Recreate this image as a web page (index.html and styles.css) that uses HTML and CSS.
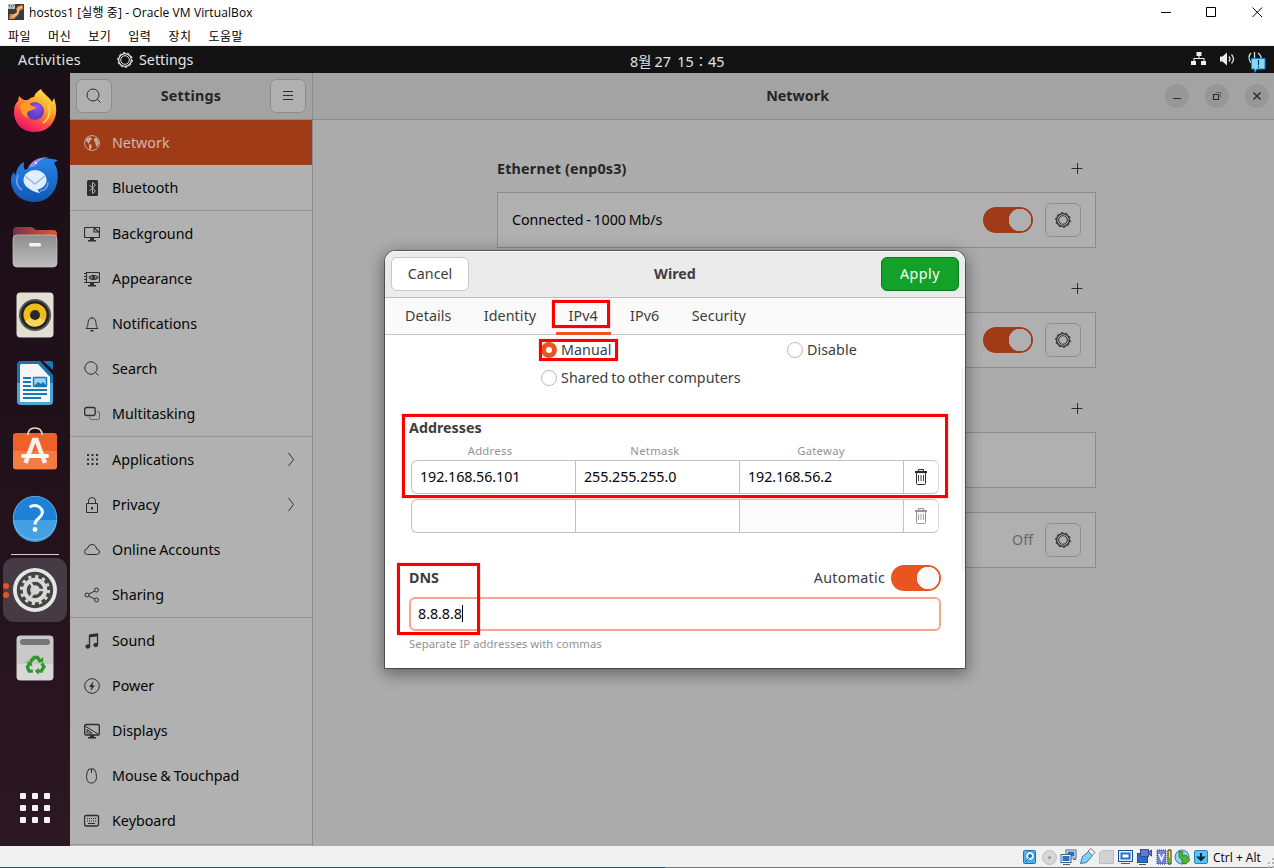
FILE: index.html
```html
<!DOCTYPE html>
<html lang="ko">
<head>
<meta charset="utf-8">
<title>hostos1 [실행 중] - Oracle VM VirtualBox</title>
<link rel="stylesheet" href="styles.css">
</head>
<body>
<svg class="defs" width="0" height="0">
  <symbol id="search" viewBox="0 0 16 16"><circle cx="7" cy="7" r="6" /><path d="M11.3 11.3L14.5 14.5"/></symbol>
  <symbol id="gear" viewBox="0 0 16 16"><circle cx="8" cy="8" r="6.4" stroke-width="1.300"/><circle cx="8" cy="8" r="4.300"/><circle cx="8" cy="8" r="7.400" stroke-width="1" stroke-dasharray="2.200 2.450"/></symbol>
  <symbol id="trash" viewBox="0 0 16 18"><path d="M5.500 3V1.500h5V3M3.500 5v10.500q0 1 1 1h7q1 0 1-1V5"/><path d="M5.500 7v6M8 7v6M10.500 7v6" stroke-width=".9"/><path d="M2 4h12" stroke-width="2.200"/></symbol>
  <symbol id="plus" viewBox="0 0 12 12"><path d="M.5 6.500h11M6.500 1v11"/></symbol>
</svg>
<div class="screen">
  <header class="titlebar">
    <svg class="vmicon" viewBox="0 0 16 16"><rect width="16" height="16" fill="#343b43"/><path d="M0 0h7v5H0z" fill="#b9b9b5"/><path d="M1 1h1v1H1zM3 2h1v1H3zM5 1h1v1H5z" fill="#444"/><path d="M15 1L10 2 8 5 9 8 6 10 2 10 1 15h5l4-4 1-4 4-2z" fill="#e78535"/><path d="M14 3l-3 1-1 5-6 4" stroke="#f8c889" stroke-width="1.500" fill="none"/></svg>
    <span class="wintitle">hostos1 [실행 중] - Oracle VM VirtualBox</span>
    <svg class="winctl" viewBox="0 0 104 12" fill="none" stroke="#000"><path d="M1 6.500h10M46.500 1.500h9v9h-9zM92.500 1.500l9.500 9.500M102 1.500l-9.500 9.500"/></svg>
  </header>
  <nav class="menubar"><span>파일</span><span>머신</span><span>보기</span><span>입력</span><span>장치</span><span>도움말</span></nav>

  <div class="topbar">
    <span class="activities">Activities</span>
    <span class="appname"><svg class="ic" width="16" height="16"><use href="#gear"/></svg>Settings</span>
    <span class="clock">8월 27&nbsp; 15∶45</span>
    <svg class="tray" viewBox="0 0 76 20" fill="#eee">
      <path d="M5.500 2h5v4h-5zM0 11h5v4H0zM10 11h5v4h-5z"/><path d="M7.500 5h1v3h5v3h-1V9h-9v2h-1V8h5z"/>
      <path d="M29 6.500h2.500L36 2.500v13l-4.500-4H29z"/><path d="M38 6.500q2 2.500 0 5M40.500 4.500q4 4.500 0 9" fill="none" stroke="#ddd" stroke-width="1.300"/>
      <path d="M60 3q-4 4 0 10M63.500 2v7M67 3q4 3 3 7" fill="none" stroke="#ddd" stroke-width="1.300"/>
      <path d="M60.500 8.500h13.500v10.500h-8l-2.500 3.500v-3.500h-3z" fill="#7fdcfb" stroke="#187ec8"/><path d="M67.500 10v5M67.500 16v1.500" stroke="#123" stroke-width="1.200"/>
    </svg>
  </div>

  <div class="desktop">
    <aside class="dock">
      <div class="app"><svg viewBox="0 0 48 48">
        <defs><linearGradient id="fx" x1=".85" y1="0" x2=".3" y2="1"><stop offset="0" stop-color="#fff24a"/><stop offset=".4" stop-color="#ffa32c"/><stop offset=".7" stop-color="#ff4a45"/><stop offset="1" stop-color="#e8106f"/></linearGradient><radialGradient id="fp" cx=".6" cy=".3"><stop offset="0" stop-color="#9c50f0"/><stop offset="1" stop-color="#5b3fc4"/></radialGradient></defs>
        <path d="M30 2c1 4 9 8 11 13l2-4c4 12 2 19-1 24-4 7-11 10-19 10C11 45 3 36 3 25c0-5 1-8 4-11l1-5c2 2 3 3 5 4h4c2-2 4-3 6-3 1-4 4-6 7-8z" fill="url(#fx)"/><circle cx="24" cy="24" r="9" fill="url(#fp)"/><path d="M9 18c4-3 8-3 12 1l4 1c-1 3-5 3-7 4-3 2-2 5 0 7-5-1-9-5-9-13z" fill="#ff9b22"/><path d="M37 17c3 8 1 15-5 19" stroke="#ffd645" stroke-width="2" fill="none"/></svg></div>
      <div class="app"><svg viewBox="0 0 48 48">
        <defs><linearGradient id="tb" x1="0" y1="0" x2="0" y2="1"><stop offset="0" stop-color="#2685e8"/><stop offset="1" stop-color="#1257b4"/></linearGradient></defs>
        <path d="M19 12q6-11 22-8l6 1-4 3c8 11 4 38-19 39C9 47 0 37 0 25q0-5 3-8l1 4Q7 9 13 7q-1 5 1 8z" fill="url(#tb)"/><path d="M17 13Q22 2 38 2q-10 2-14 9z" fill="#9b8ce7"/><path d="M7 20q-4 10 4 15M29 36q8-1 8-9" stroke="#7f9cf0" stroke-width="1.500" fill="none"/><ellipse cx="24" cy="25" rx="11.500" ry="10" fill="#deefff"/><path d="M15 31q6 6 14 7l-3-4z" fill="#deefff"/><path d="M14 21l10 8 10-8" fill="none" stroke="#9db8d6" stroke-width="1.500"/><circle cx="25" cy="8" r="1" fill="#fff"/></svg></div>
      <div class="app"><svg viewBox="0 0 48 48">
        <defs><linearGradient id="fl"><stop offset="0" stop-color="#77304f"/><stop offset="1" stop-color="#e5582a"/></linearGradient><linearGradient id="fg" x1="0" y1="0" x2="0" y2="1"><stop offset="0" stop-color="#8d8d8d"/><stop offset="1" stop-color="#bdbdbd"/></linearGradient></defs>
        <path d="M2 8q0-4 4-4h15l4 3h17q4 0 4 4v8H2z" fill="url(#fl)"/><rect x="2" y="12" width="44" height="32" rx="4" fill="url(#fg)" stroke="#c9c9c9" stroke-width=".7"/><rect x="18" y="20" width="12" height="3.500" rx="1.500" fill="#f3f3f3"/></svg></div>
      <div class="app"><svg viewBox="0 0 48 48">
        <rect x="5.500" y="1.500" width="37" height="45" rx="4" fill="#e2dfd3"/><circle cx="24" cy="24" r="16" fill="#55534f"/><circle cx="24" cy="24" r="14" fill="#20212e"/><circle cx="24" cy="24" r="11.500" fill="#f0bd17"/><path d="M24 24L14 30q4 6 10 5.500T34 30z" fill="#fad55a"/><circle cx="24" cy="24" r="5" fill="#292929"/></svg></div>
      <div class="app"><svg viewBox="0 0 48 48">
        <path d="M10 2h19l13 14v26q0 4-4 4H10q-4 0-4-4V6q0-4 4-4z" fill="#1676b4"/><path d="M6 24h36v18q0 4-4 4H10q-4 0-4-4z" fill="#49a7d8"/><path d="M10 5h17l12 13v25H10q-1 0-1-1V6z" fill="#f7f7f7"/><path d="M32 2h8q2 0 2 2v7z" fill="#1579b7"/><path d="M12 19h8M12 23h8M12 27h8M12 31h24M12 35h24M12 39h18" stroke="#1579b7" stroke-width="2"/><rect x="22.500" y="18.500" width="13" height="9" rx="1" fill="#9cd2f3" stroke="#1579b7" stroke-width="1.500"/><path d="M23 27l4-4 3 2 2-2 4 4z" fill="#1579b7"/></svg></div>
      <div class="app"><svg viewBox="0 0 48 48">
        <rect x="2" y="6" width="44" height="36.500" rx="3" fill="#f0602a"/><path d="M2 24h44v15q0 3-3 3H5q-3 0-3-3z" fill="#f37c43"/><path d="M17 8q0-7 7-7t7 7" fill="none" stroke="#ecdcb0" stroke-width="1.700"/><path d="M14.500 36L23 13h2.500L34 36" fill="none" stroke="#f7f1ea" stroke-width="4.500"/><path d="M12 29h24" stroke="#fff" stroke-width="4" stroke-linecap="round"/></svg></div>
      <div class="app"><svg viewBox="0 1 48 48">
        <circle cx="24" cy="24" r="22" fill="#1d81d7"/><path d="M2 26h44a22 22 0 0 1-44 0z" fill="#42a1e2"/><circle cx="24" cy="24" r="21.700" fill="none" stroke="#8fcaf0" stroke-width=".6"/><path d="M18.500 13q5-2.500 9-.5t4 6q-.5 3-4 6-3.500 2.500-3.500 6" fill="none" stroke="#fff" stroke-width="3"/><circle cx="24" cy="35.500" r="2.400" fill="#fff"/></svg></div>
      <div class="rule"></div>
      <div class="app active"><i class="dots"></i><svg viewBox="0 0 48 48">
        <circle cx="24" cy="24" r="22" fill="#e6e6e6"/><circle cx="24" cy="24" r="18.200" fill="#444442"/><circle cx="24" cy="24" r="13.600" fill="none" stroke="#d9d9d9" stroke-width="3" stroke-dasharray="3.200 3.900"/><circle cx="24" cy="24" r="10.300" fill="none" stroke="#d9d9d9" stroke-width="4"/><circle cx="24" cy="24" r="4.800" fill="#d4d4d4"/><path d="M24 24h9M24 24l-5 8M24 24l-5-8" stroke="#d4d4d4" stroke-width="2.500"/></svg></div>
      <div class="app"><svg viewBox="0 0 48 48">
        <rect x="5.500" y="1.500" width="37" height="45" rx="4" fill="#c9c9c9"/><path d="M6 30h36v13q0 3-3 3H9q-3 0-3-3z" fill="#d8d8d8"/><rect x="9" y="5" width="30" height="6" rx="3" fill="#757575"/><g transform="translate(3.600 4.800) scale(.85)"><g fill="none" stroke="#30972a" stroke-width="4"><path d="M18.500 27l4.500-5h4l3.500 5M32 29l2.500 4-3 5H26M21.500 38H17l-2-5 3.500-5"/></g><path d="M27 27.500h6.500v-6zM28 34l-4 4 4 4.500zM13 27h7l1 6z" fill="#30972a"/></g></svg></div>
      <div class="app grid"><svg viewBox="0 0 48 48" fill="#f5f2f3"><g id="r"><rect x="9" y="9" width="6" height="6" rx="1"/><rect x="21" y="9" width="6" height="6" rx="1"/><rect x="33" y="9" width="6" height="6" rx="1"/></g><use href="#r" y="12"/><use href="#r" y="24"/></svg></div>
    </aside>

    <aside class="sidebar">
      <div class="sidehead"><span class="btn"><svg class="ic" width="16" height="16"><use href="#search"/></svg></span><b>Settings</b><span class="btn"><svg class="ic" width="16" height="16"><path d="M3 3.500h10M3 7.500h10M3 11.500h10"/></svg></span></div>
      <div class="row selected"><svg class="ic" viewBox="0 0 16 16"><circle cx="8" cy="8" r="7.500"/><path d="M2 3l5-1 1 2-2 2-1 3-3-3zM5 9l3 1-1 4-2 1zM10 3l3 0 2 5-2 4-1-1-1-4-1-1z" fill="currentColor" stroke="none"/></svg>Network</div>
      <div class="row"><svg class="ic" viewBox="0 0 16 16"><rect x="3" y="0" width="11" height="16" rx="1.500" fill="#2d2d2d" stroke="none"/><path d="M5.500 5l6 6-3 2.500v-11l3 2.500-6 6" stroke="#b1b1b1"/></svg>Bluetooth</div>
      <div class="row sep"><svg class="ic" viewBox="0 0 16 16"><path d="M9 1.500H1.500q-1 0-1 1v8q0 1 1 1h13q1 0 1-1V7M10 1.500h5.500V7L10 1.500V6h5" stroke-width="1.200"/><path d="M6 12h4v2h2v1.500H4V14h2z" fill="#2d2d2d" stroke="none"/></svg>Background</div>
      <div class="row"><svg class="ic" viewBox="0 0 16 16"><path d="M2.500 1.500h12q1 0 1 1v8q0 1-1 1h-12M2.500 1v11M0 2.500h2M0 5.500h2M0 8.500h2M0 11.500h2M5 6.500q4.500-4.500 9 0-4.500 4.500-9 0" stroke-width="1.100"/><circle cx="9.500" cy="6.500" r="1.300" fill="#2d2d2d"/><path d="M6 12h4v2h2v1.500H4V14h2z" fill="#2d2d2d" stroke="none"/></svg>Appearance</div>
      <div class="row"><svg class="ic" viewBox="0 0 16 16"><path d="M2 12.500q2-1.500 2-5Q4 2 8 2t4 5.500q0 3.500 2 5zM8 2V1"/><path d="M6.500 14h3v1.500h-3z" fill="#2d2d2d" stroke="none"/></svg>Notifications</div>
      <div class="row"><svg class="ic" viewBox="0 0 16 16"><circle cx="7" cy="7" r="6.200"/><path d="M11.500 11.500l3 3"/></svg>Search</div>
      <div class="row"><svg class="ic" viewBox="0 0 16 16"><rect x=".7" y="1.500" width="10.500" height="8" rx="1.800" stroke-width="1.300"/><path d="M5.500 11v1q0 1.500 1.500 1.500h7q1.500 0 1.500-1.500V7q0-1.500-1.500-1.500h-1" stroke="#6a6a6a"/></svg>Multitasking</div>
      <div class="row sep"><svg class="ic" viewBox="0 0 16 16"><path d="M3 3h11M3 7.500h11M3 12h11" stroke-width="2" stroke-dasharray="2 2.500"/></svg>Applications<svg class="chev" viewBox="0 0 8 16"><path d="M1.500 1L6.500 7.500l-5 6.500"/></svg></div>
      <div class="row"><svg class="ic" viewBox="0 0 16 16"><path d="M2.500 6.500h11v9h-11zM4.500 6V4Q4.500.5 8 .5T11.500 4v2"/><path d="M7 10h2v2.500H7z" fill="#2d2d2d" stroke="none"/></svg>Privacy<svg class="chev" viewBox="0 0 8 16"><path d="M1.500 1L6.500 7.500l-5 6.500"/></svg></div>
      <div class="row"><svg class="ic" viewBox="0 0 16 16"><path d="M3.500 12.500q-3 0-3-3 0-2.500 3-3Q4 2.500 8 2.500t4.500 4.500q3 .5 3 3t-3 2.500z"/></svg>Online Accounts</div>
      <div class="row"><svg class="ic" viewBox="0 0 16 16"><circle cx="3" cy="8" r="2"/><circle cx="12.500" cy="3" r="2"/><circle cx="12.500" cy="13" r="2"/><path d="M4.800 7l6-3M4.800 9l6 3"/></svg>Sharing</div>
      <div class="row sep"><svg class="ic" viewBox="0 0 16 16"><path d="M5.500 13V2.500l8-1.200v10.200" stroke-width="1.300"/><path d="M5 1.500L14 .3v3L5 4.500z" fill="#2d2d2d" stroke="none"/><ellipse cx="3.800" cy="13.500" rx="2" ry="1.700" fill="#2d2d2d"/><ellipse cx="11.800" cy="12" rx="2" ry="1.700" fill="#2d2d2d"/></svg>Sound</div>
      <div class="row"><svg class="ic" viewBox="0 0 16 16"><circle cx="8" cy="8" r="7.300"/><path d="M9.500 3L5 9h2.500L6.500 13 11 7.500H8.500z" fill="#2d2d2d" stroke="none"/></svg>Power</div>
      <div class="row"><svg class="ic" viewBox="0 0 16 16"><rect x=".7" y="1.500" width="14.600" height="10.500" rx="1.200" stroke-width="1.300"/><path d="M1 3l14 8.500M3 6.500v3.500h5z" /><path d="M6 12h4v2h2v1.500H4V14h2z" fill="#2d2d2d" stroke="none"/></svg>Displays</div>
      <div class="row"><svg class="ic" viewBox="0 0 16 16"><path d="M5 1h5q2.500 3 2.500 7.500 0 6.500-5 6.500t-5-6.500Q2.500 4 5 1zM7.500 1v4"/></svg>Mouse &amp; Touchpad</div>
      <div class="row last"><svg class="ic" viewBox="0 0 16 16"><rect x=".5" y="2.500" width="14" height="10.500" rx="1.500" stroke-width="1.300"/><path d="M3 5.500h9M3 8h9" stroke-dasharray="1 1"/><path d="M4 10.500h7"/></svg>Keyboard</div>
    </aside>

    <main class="main">
      <div class="mainhead"><b>Network</b><div class="ctl"><span><svg class="ic" width="14" height="14"><path d="M3 9.500h8"/></svg></span><span><svg class="ic" width="14" height="14"><path d="M3.500 5.500h5v5h-5z" stroke-width="1.200"/><path d="M5.500 3.500h5v5" stroke="#666"/></svg></span><span><svg class="ic" width="14" height="14"><path d="M3.500 3.500l7 7M10.500 3.500l-7 7" stroke-width="1.500"/></svg></span></div></div>
      <div class="content">
        <div class="sect"><b>Ethernet (enp0s3)</b><svg class="ic" width="12" height="12"><use href="#plus"/></svg></div>
        <div class="card"><span>Connected - 1000 Mb/s</span><i class="switch"></i><span class="btn"><svg class="ic" width="16" height="16"><use href="#gear"/></svg></span></div>
        <div class="sect"><b></b><svg class="ic" width="12" height="12"><use href="#plus"/></svg></div>
        <div class="card"><span></span><i class="switch"></i><span class="btn"><svg class="ic" width="16" height="16"><use href="#gear"/></svg></span></div>
        <div class="sect"><b></b><svg class="ic" width="12" height="12"><use href="#plus"/></svg></div>
        <div class="card"></div>
        <div class="card proxy"><span></span><span class="off">Off</span><span class="btn"><svg class="ic" width="16" height="16"><use href="#gear"/></svg></span></div>
      </div>
    </main>
  </div>

  <footer class="status">
    <svg class="sticons" viewBox="0 0 188 20">
      <g stroke="#1c70b4"><rect x="1.500" y="3.500" width="12" height="13" rx="1" fill="#4bb4f2"/><circle cx="8" cy="9" r="4.500" fill="#e2f5ff" stroke="#2a8bd0"/><circle cx="8" cy="9" r="1.500" fill="#2575b8"/><path d="M3 15l4-4"/></g>
      <circle cx="27.500" cy="10.500" r="7" fill="#d7d7d7" stroke="#bcbcbc"/><circle cx="27.500" cy="10.500" r="1.500" fill="#999"/>
      <g stroke="#4b5f79"><rect x="44" y="3" width="10" height="8" fill="#fff"/><rect x="45.500" y="4.500" width="7" height="5" fill="#1f74d0" stroke="none"/><rect x="39" y="7.500" width="10" height="8" fill="#fff"/><rect x="40.500" y="9" width="7" height="5" fill="#1f74d0" stroke="none"/><path d="M41 17.500h7M51 12.500h3"/></g>
      <path d="M58.500 16.500l2-7 6-5 4 4-6 7z" fill="#82d0f7" stroke="#2b7db5"/><path d="M66 4l3-2.500 4 4-3 3z" fill="#eee" stroke="#777"/>
      <path d="M77.500 5.500l4-2h10v13h-14z" fill="#d2d2d2" stroke="#bdbdbd"/>
      <g stroke="#174f9b"><rect x="96.500" y="3.500" width="14" height="11" fill="#ddeafa"/><rect x="99.500" y="6.500" width="8" height="5" fill="#fff" stroke="#2474ce" stroke-width="2"/><path d="M99 16.500h9" stroke="#555"/></g>
      <g stroke="#394b83"><rect x="115.500" y="6.500" width="10" height="9" fill="#1f70cb"/><rect x="118.500" y="2.500" width="8" height="7" fill="#6377d5"/><path d="M126.500 5l3-2v6l-3-2z" fill="#6377d5"/><path d="M117 17.500h7" stroke="#555"/></g>
      <rect x="135" y="3" width="9" height="14" fill="#7183dc" stroke="#313c84" stroke-dasharray="1 1"/><path d="M137 7l2.500 6L142 7" fill="none" stroke="#fff" stroke-width="1.500"/><path d="M146 3h3v14h-3z" fill="#f8e94b" stroke="#222"/><path d="M146.500 11h2v5h-2z" fill="#35c23b"/>
      <circle cx="160" cy="10" r="7" fill="#8ed4f6" stroke="#307aad"/><path d="M157 4l4 1-1 4 4-1 4 5-4 4-4-1v-3l-3-3z" fill="#53b32d" stroke="#277020" stroke-width=".7"/>
      <rect x="172.500" y="3.500" width="13" height="13" rx="1.500" fill="#53c4f4" stroke="#2384bc"/><path d="M179 6v5M176.500 10.500l2.500 2.500 2.500-2.500z" fill="#082547" stroke="#082547" stroke-width="2"/>
    </svg>
    <span class="key">Ctrl + Alt</span><svg class="grip" viewBox="0 0 6 12" fill="#b4b4b4"><path d="M4 2h2v2H4zM0 6h2v2H0zM4 6h2v2H4zM0 10h2v2H0zM4 10h2v2H4z"/></svg>
  </footer>

  <section class="dialog">
    <div class="dhead"><span class="cancel">Cancel</span><b>Wired</b><span class="apply">Apply</span></div>
    <div class="tabs"><span>Details</span><span>Identity</span><span class="on">IPv4</span><span>IPv6</span><span>Security</span></div>
    <div class="dbody">
      <div class="radios"><label><i class="radio checked"></i><span>Manual</span></label><label><i class="radio"></i><span>Disable</span></label><label><i class="radio"></i><span>Shared to other computers</span></label></div>
      <b class="addrtitle">Addresses</b>
      <div class="cols small"><span>Address</span><span>Netmask</span><span>Gateway</span></div>
      <div class="entry"><span>192.168.56.101</span><span>255.255.255.0</span><span>192.168.56.2</span><em><svg class="ic" width="16" height="18"><use href="#trash"/></svg></em></div>
      <div class="entry blank"><span></span><span></span><span></span><em><svg class="ic" width="16" height="18"><use href="#trash"/></svg></em></div>
      <div class="dns"><b>DNS</b><span>Automatic</span><i class="switch"></i></div>
      <div class="dnsentry">8.8.8.8<i class="caret"></i></div>
      <div class="hint small">Separate IP addresses with commas</div>
    </div>
    <i class="trough"></i>
    <i class="mark m-tab"></i><i class="mark m-manual"></i><i class="mark m-addr"></i><i class="mark m-dns"></i>
  </section>
</div>
</body>
</html>
```
FILE: styles.css
```css
* { box-sizing: border-box; }
body { margin: 0; overflow: hidden; font-family: "Noto Sans", "Noto Sans CJK KR", sans-serif; font-size: 14.3px; letter-spacing: 0; word-spacing: -.8px; color: #050505; white-space: nowrap; }
i, em { font-style: normal; }
.defs { position: absolute; }
.screen { position: relative; width: 1274px; height: 868px; display: flex; flex-direction: column; background: #fff; }
.ic { flex: none; width: 16px; height: 16px; fill: none; stroke: #2d2d2d; stroke-width: 1; color: #c6a596; }

.titlebar { height: 24px; display: flex; align-items: center; padding: 0 10px 0 8px; font: 12px "Open Sans", "Noto Sans CJK KR", sans-serif; letter-spacing: .1px; word-spacing: 0; color: #000; }
.vmicon { width: 16px; height: 16px; margin-right: 5px; }
.wintitle { flex: 1; }
.winctl { width: 104px; height: 12px; }
.menubar { height: 22px; display: flex; align-items: center; gap: 17px; padding: 2px 8px 0 8px; font: 12px "Noto Sans CJK KR", sans-serif; letter-spacing: .5px; color: #000; border-bottom: 1px solid #f0f0f0; }

.topbar { height: 27px; display: grid; grid-template-columns: 117px 513px 1fr 83px; align-items: center; background: #131313; color: #e4e4e4; }
.activities { padding-left: 18px; letter-spacing: .35px; }
.appname { display: flex; align-items: center; gap: 6px; }
.appname .ic { stroke: #e4e4e4; }
.clock { padding-top: 2px; letter-spacing: 0; word-spacing: -.5px; }
.tray { width: 76px; height: 20px; overflow: visible; }

.desktop { height: 773px; display: flex; }
.dock { width: 70px; padding: 4px 0; display: flex; flex-direction: column; align-items: center; background: linear-gradient(175deg, #1b0e17, #21111b 50%, #2c1723); }
.app { width: 64px; height: 68px; flex: none; display: flex; align-items: center; justify-content: center; position: relative; }
.app svg { width: 48px; height: 48px; overflow: visible; }
.app.active { height: 64px; margin: 2px 0; background: #463b44; border-radius: 11px; }
.dots { position: absolute; left: 0; top: 25px; width: 6px; height: 6px; border-radius: 50%; background: #e95420; box-shadow: 0 9px #e95420; }
.rule { width: 48px; height: 3px; flex: none; border-top: 1px solid transparent; border-bottom: 1px solid transparent; background: #d4d0d2; background-clip: padding-box; }
.app.grid { margin-top: auto; }

.sidebar { width: 243px; background: #b1b1b1; border-right: 1px solid #8b8b8b; overflow: hidden; }
.sidehead { height: 47px; display: flex; align-items: center; justify-content: space-between; padding: 0 6px; background: #a3a3a3; border-bottom: 1px solid #8b8b8b; color: #252525; }
.sidehead b, .mainhead b { padding-bottom: 2px; letter-spacing: .25px; }
.btn { width: 36px; height: 34px; display: flex; align-items: center; justify-content: center; border: 1px solid #8d8d8d; border-radius: 6px; background: #b0b0b0; }
.row { height: 45px; display: flex; align-items: center; gap: 12px; padding: 0 17px 0 14px; }
.row.sep { height: 46px; border-top: 1px solid #979797; }
.row.selected { background: #a03b18; color: #cfb7ad; }
.row.last { height: 47px; padding-bottom: 1px; border-bottom: 1px solid #979797; }
.selected .ic { stroke: #c6a596; }
.chev { width: 8px; height: 16px; margin-left: auto; fill: none; stroke: #333; }

.main { flex: 1; background: #acacac; }
.mainhead { height: 47px; display: flex; align-items: center; justify-content: flex-end; gap: 336px; padding-right: 5px; background: #a3a3a3; border-bottom: 1px solid #8b8b8b; color: #252525; }
.mainhead b { letter-spacing: 0; }
.ctl { display: flex; gap: 16px; }
.ctl span { width: 24px; height: 24px; display: flex; align-items: center; justify-content: center; border-radius: 50%; background: #979797; }
.ctl .ic { width: 14px; height: 14px; }
.content { width: 599px; margin-left: 184px; padding-top: 8px; }
.sect { height: 64px; padding: 17px 13px 0 0; display: flex; align-items: center; justify-content: space-between; color: #252525; }
.sect b { letter-spacing: .2px; word-spacing: 0; }
.sect .ic { width: 12px; height: 12px; margin-bottom: 2px; }
.card { height: 56px; padding: 0 14px; display: flex; align-items: center; gap: 12px; border: 1px solid #8b8b8b; background: #b0b0b0; }
.card > span:first-child { flex: 1; padding-bottom: 1px; letter-spacing: -.1px; }
.card.proxy { margin-top: 24px; }
.off { color: #666; padding-bottom: 1px; }
.switch { width: 50px; height: 26px; flex: none; border-radius: 13px; background: radial-gradient(circle at 37px 13px, #b0b0b0 11px, #a03b18 11.500px); }

.status { height: 22px; display: flex; align-items: center; justify-content: flex-end; gap: 3px; background: linear-gradient(90deg, #275368 665px, #777 665px) 0 100% / 100% 1px no-repeat #f0f0f0; font: 12px "Open Sans", sans-serif; letter-spacing: 0; word-spacing: 0; color: #000; }
.sticons { width: 188px; height: 20px; }
.key { width: 52px; }
.grip { width: 6px; height: 12px; align-self: flex-end; }

.dialog { position: absolute; left: 385px; top: 251px; width: 580px; height: 417px; background: #fff; border-radius: 11px 11px 0 0; box-shadow: 0 0 0 1px rgba(0,0,0,.4), 0 4px 16px 2px rgba(0,0,0,.42); color: #3d3d3d; }
.dhead { height: 47px; display: flex; align-items: center; justify-content: space-between; padding: 0 6px; background: #ebebeb; border-bottom: 1px solid #bfbfbf; border-radius: 11px 11px 0 0; box-shadow: inset 0 1px #fafafa; }
.dhead b { padding-bottom: 2px; }
.cancel, .apply { width: 78px; height: 34px; padding-bottom: 2px; display: flex; align-items: center; justify-content: center; border: 1px solid #c8c8c8; border-radius: 6px; background: #fff; }
.apply { background: #12a22a; border-color: #0d7a20; color: #fff; letter-spacing: .5px; }
.tabs { height: 37px; display: flex; padding-left: 7px; background: #fafafa; border-bottom: 1px solid #c6c6c6; letter-spacing: .08px; }
.tabs span { padding: 0 13px 2px; margin-right: 6.300px; display: flex; align-items: center; }
.tabs .on { height: 37px; border-bottom: 3px solid #e95420; padding: 1px 13px 0; }
.dbody { padding: 1px 24px 0; }
.radios { display: grid; grid-template-columns: 246px 1fr; grid-auto-rows: 28px; padding-left: 132px; }
.radios label { display: flex; align-items: center; gap: 4px; }
.radios span { padding-bottom: 2px; letter-spacing: .03px; }
.radio { width: 16px; height: 16px; flex: none; border: 1px solid #b8b8b8; border-radius: 50%; }
.radio.checked { border: 5px solid #e95420; }
.addrtitle { display: block; height: 20px; line-height: 20px; margin-top: 26px; }
.small { font-size: 11.300px; letter-spacing: .28px; color: #929292; }
.cols { height: 22px; padding: 4px 0 0 2px; display: grid; grid-template-columns: 158px 172px 160px; line-height: 18px; text-align: center; }
.entry { height: 34px; margin: 0 2px 5px; display: grid; grid-template-columns: 164px 164px 164px 34px; border: 1px solid #c3c3c3; border-right-color: #ddd; border-radius: 6px; color: #050505; letter-spacing: -.08px; }
.entry span { padding-left: 8px; line-height: 32px; border-right: 1px solid #c3c3c3; }
.entry em { display: flex; align-items: center; justify-content: center; width: 33px; }
.entry .ic { height: 18px; }
.blank span:nth-child(3) { background: #fbfbfb; }
.blank .ic { opacity: .5; }
.dns { height: 26px; margin-top: 32px; display: flex; align-items: center; }
.dns span { margin-left: auto; margin-right: 6px; letter-spacing: .25px; padding-bottom: 2px; }
.dns b { padding-bottom: 2px; }
.dialog .switch { background: radial-gradient(circle at 37px 13px, #fafafa 11px, #e95420 11.500px); }
.dnsentry { height: 34px; margin-top: 6px; padding: 0 0 2px 7px; display: flex; align-items: center; border: 2px solid #f4a68e; border-radius: 6px; color: #050505; letter-spacing: -.05px; }
.caret { width: 1px; height: 17px; background: #000; }
.hint { line-height: 16px; margin-top: 5px; letter-spacing: .05px; word-spacing: 0; }
.trough { position: absolute; right: 0; top: 117px; width: 4px; height: 203px; background: #f5f5f5; }
.mark { position: absolute; border: 3px solid #f00; box-shadow: 0 0 1px rgba(255,0,0,.6); }
.m-tab { left: 167px; top: 49px; width: 58px; height: 28px; }
.m-manual { left: 154px; top: 88px; width: 79px; height: 22px; }
.m-addr { left: 17px; top: 163px; width: 546px; height: 84px; }
.m-dns { left: 12px; top: 312px; width: 83px; height: 72px; }
```
